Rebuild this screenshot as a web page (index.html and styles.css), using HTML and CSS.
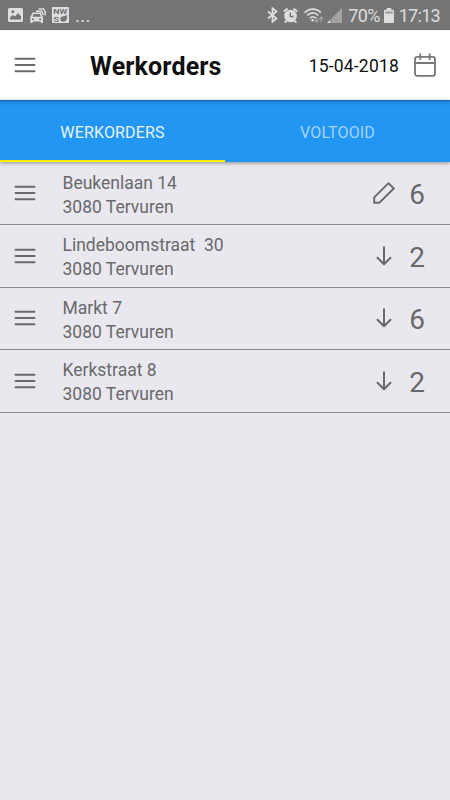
FILE: index.html
```html
<!DOCTYPE html>
<html lang="nl">
<head>
    <meta charset="UTF-8">
    <meta name="viewport" content="width=device-width, initial-scale=1.0">
    <title>Werkorders</title>
    <link rel="stylesheet" href="styles.css">
</head>
<body>
    <svg width="0" height="0" class="defs">
        <symbol id="menu" viewBox="0 0 22 18">
            <path d="M1.500 2.700h19M1.500 9h19M1.500 15.300h19" fill="none" stroke="currentColor" stroke-width="1.900" stroke-linecap="round"/>
        </symbol>
        <symbol id="down" viewBox="0 0 16 20">
            <path d="M8 1.300V18M1.500 11.800L8 18.200l6.500-6.400" fill="none" stroke="currentColor" stroke-width="2" stroke-linecap="round" stroke-linejoin="round"/>
        </symbol>
    </svg>

    <div class="statusbar">
        <div class="status-left">
            <svg width="15" height="14" viewBox="0 0 15 14">
                <path fill="currentColor" fill-rule="evenodd" d="M1.500 0h12A1.500 1.500 0 0 1 15 1.500v11a1.500 1.500 0 0 1-1.500 1.500h-12A1.500 1.500 0 0 1 0 12.500v-11A1.500 1.500 0 0 1 1.500 0zM2 11.500h11V8.300L10 5 7 8.500 4.500 7 2 9.500zM3.500 2.500v2.600h2.600V2.500z"/>
            </svg>
            <svg width="16" height="15" viewBox="0 0 16 15">
                <path fill="currentColor" fill-rule="evenodd" d="M2.500 4.500h8.300L13 9.200V15h-2.300v-1.500H2.600V15H.3V9.200zM3.600 6L2.400 8.800h8.500L9.700 6zM2 10.500V12h2v-1.500zM9.200 10.500V12h2v-1.500z"/>
                <path fill="none" stroke="currentColor" stroke-width="1.500" d="M6 3.300h5.500l2 3.500M8.500 1h5L15.200 4v3.500"/>
            </svg>
            <svg class="nws" width="17" height="16" viewBox="0 0 17 16">
                <rect width="17" height="16" rx="1" fill="#dedede"/>
                <text x="1.300" y="6.700" textLength="14" lengthAdjust="spacingAndGlyphs">NW</text>
                <text x="1.300" y="14.600" textLength="6" lengthAdjust="spacingAndGlyphs">S</text>
                <path fill="#757575" d="M14.800 8c.6 4-.5 6.700-3.500 6.700a3 3 0 0 1-3-3c0-3 3.500-1.700 6.500-3.700z"/>
            </svg>
            <span class="dots">...</span>
        </div>
        <div class="status-right">
            <svg width="11" height="16" viewBox="0 0 11 16">
                <path fill="none" stroke="currentColor" stroke-width="1.700" d="M1 4.500l8.500 7-4 3.300V1.200l4 3.300-8.500 7"/>
            </svg>
            <svg class="alarm" width="15" height="15" viewBox="0 0 15 15">
                <circle cx="7.500" cy="8" r="6.300" fill="currentColor"/>
                <path stroke="currentColor" stroke-width="2" stroke-linecap="round" d="M1.300 3L4 1.200M13.700 3L11 1.200M3.500 12.500L2.300 14M11.500 12.500l1.200 1.500"/>
                <path fill="none" stroke="#757575" stroke-width="1.400" d="M7.300 4.500v4h3.300"/>
            </svg>
            <svg class="wifi" width="20" height="15" viewBox="0 0 20 15">
                <path fill="none" stroke="currentColor" stroke-width="1.700" d="M.6 4.800C5-.2 12.500-.2 17 4.800M3.300 7.500c3-3.400 8-3.400 11 0M5.900 10.100c1.700-1.800 4.100-1.800 5.800 0"/>
                <circle cx="8.600" cy="12.200" r="1.300" fill="currentColor"/>
                <path fill="none" stroke="#a5a5a5" stroke-width="1.200" d="M12.800 9v5M11 12.200l1.800 1.900 1.800-1.900M17.200 14V9M15.400 11l1.800-1.900L19 11"/>
            </svg>
            <svg class="signal" width="15" height="15" viewBox="0 0 15 15">
                <path fill="#a2a2a2" d="M15 0v15H4.500v-4.500z"/>
                <path fill="currentColor" d="M0 15h3.500v-3.500z"/>
            </svg>
            <span class="battery-text">70%</span>
            <svg class="battery" width="10" height="15" viewBox="0 0 10 15">
                <path fill="#a5a5a5" d="M1.300 3.500h7.400v2H1.300z"/>
                <path fill="currentColor" fill-rule="evenodd" d="M2.800 0h4.400v1.800H9a1 1 0 0 1 1 1V14a1 1 0 0 1-1 1H1a1 1 0 0 1-1-1V2.800a1 1 0 0 1 1-1h1.800zM1.300 3.500v2h7.400v-2z"/>
            </svg>
            <span class="clock">17:13</span>
        </div>
    </div>

    <header class="header">
        <svg class="menu"><use href="#menu"/></svg>
        <h1>Werkorders</h1>
        <span class="date">15-04-2018</span>
        <svg class="calendar" viewBox="0 0 22 24">
            <path fill="none" stroke="currentColor" stroke-width="1.800" stroke-linecap="round" stroke-linejoin="round" d="M3 3.800h16a2 2 0 0 1 2 2v15a2 2 0 0 1-2 2H3a2 2 0 0 1-2-2v-15a2 2 0 0 1 2-2zM1 10h20M6.300 1.200v5M15.700 1.200v5"/>
        </svg>
    </header>

    <nav class="tabs">
        <div class="tab active">WERKORDERS</div>
        <div class="tab">VOLTOOID</div>
    </nav>

    <main class="list">
        <div class="row">
            <svg class="menu"><use href="#menu"/></svg>
            <div class="address">Beukenlaan 14<br>3080 Tervuren</div>
            <svg class="pencil" viewBox="0 0 22 22">
                <path fill="none" stroke="currentColor" stroke-width="1.900" stroke-linejoin="round" d="M1.200 20.700v-5.300L15.500 1.200l5.300 5.300L6.500 20.700z"/>
            </svg>
            <span class="count">6</span>
        </div>
        <div class="row">
            <svg class="menu"><use href="#menu"/></svg>
            <div class="address">Lindeboomstraat&nbsp; 30<br>3080 Tervuren</div>
            <svg class="down"><use href="#down"/></svg>
            <span class="count">2</span>
        </div>
        <div class="row">
            <svg class="menu"><use href="#menu"/></svg>
            <div class="address">Markt 7<br>3080 Tervuren</div>
            <svg class="down"><use href="#down"/></svg>
            <span class="count">6</span>
        </div>
        <div class="row">
            <svg class="menu"><use href="#menu"/></svg>
            <div class="address">Kerkstraat 8<br>3080 Tervuren</div>
            <svg class="down"><use href="#down"/></svg>
            <span class="count">2</span>
        </div>
    </main>
</body>
</html>
```
FILE: styles.css
```css
* {
    box-sizing: border-box;
}
body {
    margin: 0;
    height: 800px;
    display: flex;
    flex-direction: column;
    overflow: hidden;
    background-color: #e9e8ee;
    color: #69696c;
    font-family: Roboto, "Liberation Sans", sans-serif;
}
svg {
    display: block;
    flex: none;
}
.defs {
    display: none;
}
.statusbar {
    height: 30px;
    flex: none;
    display: flex;
    justify-content: space-between;
    padding: 1px 10px 0 8px;
    background-color: #757575;
    border-bottom: 1px solid #6b6668;
    color: #dedede;
}
.status-left,
.status-right {
    display: flex;
    align-items: center;
}
.status-left {
    gap: 7px;
}
.dots {
    margin-left: -1px;
    font-size: 19px;
    letter-spacing: 0.3px;
}
.nws {
    margin-left: -1px;
}
.nws text {
    font-size: 6.7px;
    font-weight: bold;
    fill: #757575;
}
.alarm {
    margin-left: 5px;
}
.wifi {
    margin-left: 6px;
}
.signal {
    margin-left: 3px;
}
.battery-text {
    margin-left: 6px;
    font-size: 18px;
    letter-spacing: -0.7px;
}
.battery {
    margin-left: 4px;
}
.clock {
    margin-left: 5px;
    font-size: 18px;
    letter-spacing: -0.7px;
}
.header {
    height: 70px;
    flex: none;
    display: flex;
    align-items: center;
    padding: 0 14px;
    background-color: #fff;
}
.menu {
    width: 22px;
    height: 18px;
}
h1 {
    margin: 2px auto 0 54px;
    color: #101010;
    font-size: 25px;
    font-weight: bold;
    letter-spacing: 0.15px;
}
.date {
    margin-top: 2px;
    color: #101010;
    font-size: 17.5px;
    letter-spacing: 0.2px;
}
.calendar {
    width: 22px;
    height: 24px;
    margin: 0 0 0 15px;
    color: #777;
}
.tabs {
    height: 62px;
    flex: none;
    display: flex;
    background: linear-gradient(#1165b4, #1f89e0 2px, #2196f3 6px);
    box-shadow: 0 1px 4px rgba(0, 0, 0, 0.4);
}
.tab {
    flex: 1;
    display: flex;
    align-items: center;
    justify-content: center;
    padding-top: 4px;
    border-bottom: 2px solid transparent;
    color: #a8d4fa;
    font-size: 16px;
    letter-spacing: 0.15px;
}
.tab.active {
    border-bottom-color: #ffeb00;
    color: #e9f4fe;
}
.list {
    padding-top: 0.5px;
}
.row {
    height: 62.5px;
    display: flex;
    align-items: center;
    padding: 0 25px 0 14px;
    border-bottom: 1px solid #88888b;
}
.address {
    flex: 1;
    margin: 3px 0 0 26.5px;
    font-size: 17.5px;
    line-height: 24px;
}
.pencil {
    width: 22px;
    height: 22px;
}
.down {
    width: 16px;
    height: 20px;
    margin-right: 3px;
}
.count {
    margin: 4px 0 0 14px;
    font-size: 28px;
    line-height: 34px;
}
```
